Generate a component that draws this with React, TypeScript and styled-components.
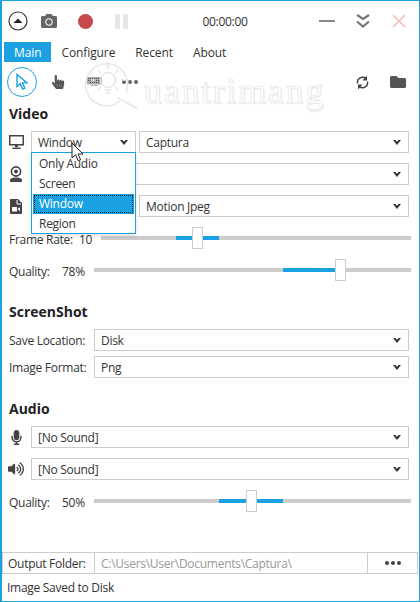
import styled, { createGlobalStyle } from "styled-components";
import { FaCamera, FaFolder, FaHandPointer, FaMicrophone, FaVolumeUp } from "react-icons/fa";

const GlobalStyle = createGlobalStyle`
  html, body {
    margin: 0;
    padding: 0;
    background: #fff;
  }
  body {
    font-family: "Open Sans", "Noto Sans", sans-serif;
    font-size: 12px;
    letter-spacing: -0.28px;
    color: #333;
  }
`;

const Chevron = () => (
  <Arrow viewBox="0 0 10 6">
    <path d="M0 0h3l2 2 2-2h3L5 6z" fill="#333" />
  </Arrow>
);

const Combo = ({ value, width }: { value: string; width?: number }) => (
  <ComboBox $width={width}>
    <span>{value}</span>
    <Chevron />
  </ComboBox>
);

const Slider = ({ left, width, thumb }: { left: number; width: number; thumb: number }) => (
  <Track>
    <Fill style={{ left, width }} />
    <Thumb style={{ left: thumb }} />
  </Track>
);

const Dots = ({ color }: { color: string }) => (
  <DotGroup $color={color}>
    <i />
    <i />
    <i />
  </DotGroup>
);

const App = () => {
  return (
    <>
      <GlobalStyle />
      <Window>
        <TitleBar>
          <IconSlot $width={32}>
            <svg width="20" height="20" viewBox="0 0 20 20">
              <circle cx="10" cy="10" r="9" fill="none" stroke="#333" strokeWidth="1.2" />
              <path d="M5.500 12L10 7.500 14.500 12z" fill="#222" />
            </svg>
          </IconSlot>
          <IconSlot $width={30}>
            <FaCamera size={16} color="#666" />
          </IconSlot>
          <IconSlot $width={42}>
            <RecordDot />
          </IconSlot>
          <IconSlot $width={30}>
            <PauseIcon>
              <i />
              <i />
            </PauseIcon>
          </IconSlot>
          <Timer>00:00:00</Timer>
          <IconSlot>
            <MinimizeBar />
          </IconSlot>
          <IconSlot>
            <svg width="16" height="16" viewBox="0 0 16 16">
              <path d="M2 2l6 4 6-4M2 8.500l6 5 6-5" fill="none" stroke="#777" strokeWidth="2.2" />
            </svg>
          </IconSlot>
          <IconSlot>
            <svg width="16" height="16" viewBox="0 0 16 16">
              <path d="M2 2l12 12M14 2L2 14" fill="none" stroke="#f8bcbc" strokeWidth="1.6" />
            </svg>
          </IconSlot>
        </TitleBar>

        <Tabs>
          <Tab $active>Main</Tab>
          <Tab>Configure</Tab>
          <Tab>Recent</Tab>
          <Tab>About</Tab>
        </Tabs>

        <Toolbar>
          <CursorButton>
            <svg width="14" height="18" viewBox="0 0 14 18">
              <path d="M2 1.500v12l3.200-2.800 2.400 5.400 2.200-1-2.400-5.200H12z" fill="#fff" stroke="#1ba1e2" strokeWidth="1.4" />
            </svg>
          </CursorButton>
          <ToolSlot>
            <FaHandPointer size={14} color="#555" />
          </ToolSlot>
          <ToolSlot>
            <svg width="15" height="10" viewBox="0 0 15 10">
              <rect x="0" y="0" width="15" height="7.500" fill="#aaa" />
              <path d="M1 1.500h13M1 3.500h13M3 5.500h9" stroke="#555" strokeDasharray="1 1" />
              <path d="M4 8.500h7" stroke="#bbb" />
            </svg>
          </ToolSlot>
          <ToolSlot>
            <Dots color="#666" />
          </ToolSlot>
          <ToolSpacer />
          <ToolSlot>
            <svg width="13" height="15" viewBox="0 0 13 15">
              <path d="M1.600 8.500A5 5 0 0 1 9.600 3.400M11.400 6.500A5 5 0 0 1 3.400 11.600" fill="none" stroke="#444" strokeWidth="1.500" />
              <path d="M11 0.500v5h-4.500zM2 14.500v-5h4.500z" fill="#444" />
            </svg>
          </ToolSlot>
          <ToolSlot>
            <FaFolder size={16} color="#555" />
          </ToolSlot>
        </Toolbar>

        <Section>
          <Heading>Video</Heading>
          <IconRow>
            <RowIcon>
              <svg width="15" height="14" viewBox="0 0 15 14">
                <rect x="0.750" y="0.750" width="13.500" height="9" fill="none" stroke="#444" strokeWidth="1.500" />
                <path d="M6 10h3v2H6zM3.500 12.500h8V14h-8z" fill="#444" />
              </svg>
            </RowIcon>
            <Combo value="Window" width={105} />
            <Combo value="Captura" />
          </IconRow>
          <IconRow>
            <RowIcon>
              <svg width="14" height="16" viewBox="0 0 14 16">
                <circle cx="7" cy="5.500" r="4.600" fill="none" stroke="#444" strokeWidth="1.600" />
                <circle cx="7" cy="5.500" r="2" fill="#444" />
                <path d="M1 16v-1.500c0-2 2-3 6-3s6 1 6 3V16z" fill="#444" />
              </svg>
            </RowIcon>
            <Combo value="" />
          </IconRow>
          <IconRow>
            <RowIcon>
              <svg width="12" height="15" viewBox="0 0 12 15">
                <path d="M1 0h7l4 4v10a1 1 0 0 1-1 1H1a1 1 0 0 1-1-1V1a1 1 0 0 1 1-1z" fill="#444" />
                <path d="M7 1v4h4" fill="none" stroke="#fff" />
                <rect x="2" y="8" width="5" height="4.500" fill="#fff" />
                <path d="M7.500 10l2.500-1.800v4.100z" fill="#fff" />
              </svg>
            </RowIcon>
            <Combo value="" width={105} />
            <Combo value="Motion Jpeg" />
          </IconRow>

          <Dropdown>
            <DropItem>Only Audio</DropItem>
            <DropItem>Screen</DropItem>
            <DropItem $selected>Window</DropItem>
            <DropItem>Region</DropItem>
          </Dropdown>
          <Pointer viewBox="0 0 14 20">
            <path d="M1 1v15l3.600-3.200 2.600 6 2.400-1-2.600-5.800H12z" fill="#fff" stroke="#222" strokeWidth="1" />
          </Pointer>

          <SliderRow>
            <FrameLabel>Frame Rate:</FrameLabel>
            <FrameValue>10</FrameValue>
            <Slider left={75} width={43} thumb={91} />
          </SliderRow>
          <SliderRow>
            <SliderLabel>Quality:</SliderLabel>
            <SliderValue>78%</SliderValue>
            <Slider left={189} width={63} thumb={241} />
          </SliderRow>
        </Section>

        <ShotSection>
          <Heading>ScreenShot</Heading>
          <LabelRow>
            <FieldLabel>Save Location:</FieldLabel>
            <Combo value="Disk" />
          </LabelRow>
          <LabelRow>
            <FieldLabel>Image Format:</FieldLabel>
            <Combo value="Png" />
          </LabelRow>
        </ShotSection>

        <AudioSection>
          <Heading>Audio</Heading>
          <IconRow>
            <RowIcon>
              <FaMicrophone size={15} color="#444" />
            </RowIcon>
            <Combo value="[No Sound]" />
          </IconRow>
          <IconRow>
            <RowIcon>
              <FaVolumeUp size={16} color="#444" />
            </RowIcon>
            <Combo value="[No Sound]" />
          </IconRow>
          <SliderRow>
            <SliderLabel>Quality:</SliderLabel>
            <SliderValue>50%</SliderValue>
            <Slider left={125} width={64} thumb={152} />
          </SliderRow>
        </AudioSection>

        <OutputBar>
          <OutputLabel>Output Folder:</OutputLabel>
          <OutputPath>C:\Users\User\Documents\Captura\</OutputPath>
          <OutputMore>
            <Dots color="#444" />
          </OutputMore>
        </OutputBar>
        <Status>Image Saved to Disk</Status>

        <Watermark>
          <svg width="62" height="50" viewBox="0 0 62 50">
            <path
              d="M38 41A21 21 0 1 1 44 33M36 38l20 11"
              fill="none"
              stroke="#e6e6e6"
              strokeWidth="1.500"
            />
            <circle cx="26" cy="20" r="7.500" fill="none" stroke="#e6e6e6" strokeWidth="1.500" />
            <path
              d="M23 30h6M24 33h4M26 4v5M13 20h-4M39 20h4M16 10l3 3M36 10l-3 3M16 30l3-3M36 30l-3-3"
              stroke="#e6e6e6"
              strokeWidth="1.500"
            />
          </svg>
          <WatermarkText>uantrimang</WatermarkText>
        </Watermark>
      </Window>
    </>
  );
};

export default App;

const Window = styled.div`
  position: relative;
  box-sizing: border-box;
  width: 420px;
  height: 602px;
  border: 1px solid #1ba1e2;
  box-shadow: inset 1px 0 0 #1ba1e2;
  overflow: hidden;
  background: #fff;
`;

const TitleBar = styled.div`
  display: flex;
  align-items: center;
  height: 40px;
  padding: 0 2px 0 1px;
`;

const IconSlot = styled.div<{ $width?: number }>`
  display: flex;
  flex: none;
  align-items: center;
  justify-content: center;
  width: ${(p) => p.$width ?? 36}px;
  height: 40px;
`;

const RecordDot = styled.div`
  width: 15px;
  height: 15px;
  border-radius: 50%;
  background: #c8484b;
`;

const PauseIcon = styled.div`
  display: flex;
  gap: 3px;
  i {
    width: 5px;
    height: 15px;
    background: #e6e6e6;
  }
`;

const MinimizeBar = styled.div`
  width: 16px;
  height: 2px;
  background: #888;
`;

const Timer = styled.div`
  flex: 1;
  text-align: center;
  padding-left: 5px;
`;

const Tabs = styled.div`
  display: flex;
  height: 20px;
  padding-left: 3px;
  margin-top: 1px;
  align-items: stretch;
`;

const Tab = styled.div<{ $active?: boolean }>`
  display: flex;
  align-items: center;
  padding: 0 10px;
  letter-spacing: -0.1px;
  background: ${(p) => (p.$active ? "#1ba1e2" : "transparent")};
  color: ${(p) => (p.$active ? "#fff" : "#333")};
`;

const Toolbar = styled.div`
  display: flex;
  align-items: center;
  height: 32px;
  margin-top: 4px;
  padding: 0 3px;
`;

const CursorButton = styled.div`
  box-sizing: border-box;
  display: flex;
  align-items: center;
  justify-content: center;
  width: 30px;
  height: 30px;
  margin: 0 3px;
  border: 1px solid #1ba1e2;
  border-radius: 50%;
`;

const ToolSlot = styled.div`
  display: flex;
  align-items: center;
  justify-content: center;
  width: 36px;
  height: 32px;
`;

const ToolSpacer = styled.div`
  flex: 1;
`;

const DotGroup = styled.span<{ $color: string }>`
  display: inline-flex;
  gap: 2px;
  i {
    width: 4px;
    height: 4px;
    border-radius: 50%;
    background: ${(p) => p.$color};
  }
`;

const Section = styled.div`
  position: relative;
  display: flex;
  flex-direction: column;
  padding: 7px 10px 0 8px;
`;

const ShotSection = styled(Section)`
  padding-top: 12px;
`;

const AudioSection = styled(Section)`
  padding-top: 17px;
`;

const Heading = styled.div`
  font-size: 14px;
  font-weight: 700;
  letter-spacing: 0;
  color: #222;
  line-height: 17px;
  margin-bottom: 9px;
`;

const IconRow = styled.div`
  display: flex;
  align-items: center;
  gap: 3px;
  height: 22px;
  margin-bottom: 10px;
`;

const RowIcon = styled.div`
  display: flex;
  align-items: center;
  justify-content: center;
  width: 16px;
  margin-right: 4px;
  margin-left: -1px;
`;

const ComboBox = styled.div<{ $width?: number }>`
  box-sizing: border-box;
  display: flex;
  align-items: center;
  justify-content: space-between;
  height: 22px;
  padding: 0 7px 0 6px;
  border: 1px solid #ccc;
  background: #fff;
  ${(p) => (p.$width ? `width: ${p.$width}px; flex: none;` : "flex: 1;")}
`;

const Arrow = styled.svg`
  width: 8px;
  height: 5px;
`;

const Dropdown = styled.div`
  position: absolute;
  z-index: 2;
  top: 54px;
  left: 30px;
  box-sizing: border-box;
  width: 105px;
  height: 82px;
  padding: 1px;
  border: 1px solid #1ba1e2;
  background: #fff;
  box-shadow: 0 2px 4px rgba(0, 0, 0, 0.12);
`;

const DropItem = styled.div<{ $selected?: boolean }>`
  box-sizing: border-box;
  display: flex;
  align-items: center;
  height: 20px;
  padding: 0 0 1px 6px;
  line-height: 15px;
  background: ${(p) => (p.$selected ? "#1ba1e2" : "transparent")};
  color: ${(p) => (p.$selected ? "#fff" : "#333")};
  outline: ${(p) => (p.$selected ? "1px dotted #123" : "none")};
  outline-offset: -2px;
`;

const Pointer = styled.svg`
  position: absolute;
  z-index: 3;
  top: 44px;
  left: 70px;
  width: 14px;
  height: 20px;
`;

const SliderRow = styled.div`
  display: flex;
  align-items: center;
  height: 22px;
  margin-bottom: 10px;
`;

const RowText = styled.span`
  flex: none;
  padding-top: 2px;
  line-height: 15px;
`;

const SliderLabel = styled(RowText)`
  width: 53px;
`;

const SliderValue = styled(RowText)`
  width: 32px;
`;

const FrameLabel = styled(RowText)`
  width: 70px;
`;

const FrameValue = styled(RowText)`
  width: 22px;
`;

const Track = styled.div`
  position: relative;
  flex: 1;
  height: 4px;
  background: #ccc;
  margin-right: -2px;
`;

const Fill = styled.div`
  position: absolute;
  top: 0;
  height: 4px;
  background: #1ba1e2;
`;

const Thumb = styled.div`
  position: absolute;
  top: -9px;
  box-sizing: border-box;
  width: 11px;
  height: 22px;
  border: 1px solid #ccc;
  background: #fff;
`;

const LabelRow = styled.div`
  display: flex;
  align-items: center;
  height: 22px;
  margin-bottom: 5px;
`;

const FieldLabel = styled.span`
  width: 85px;
  flex: none;
`;

const OutputBar = styled.div`
  position: absolute;
  left: 1px;
  right: 0;
  top: 551px;
  display: flex;
  height: 22px;
`;

const OutputCell = styled.div`
  box-sizing: border-box;
  display: flex;
  flex: none;
  align-items: center;
  border: 1px solid #ccc;
  margin-right: -1px;
`;

const OutputLabel = styled(OutputCell)`
  width: 93px;
  padding-left: 5px;
`;

const OutputPath = styled(OutputCell)`
  width: 274px;
  padding-left: 6px;
  color: #999;
`;

const OutputMore = styled(OutputCell)`
  width: 51px;
  justify-content: center;
`;

const Status = styled.div`
  position: absolute;
  left: 6px;
  top: 578px;
`;

const Watermark = styled.div`
  position: absolute;
  top: 59px;
  left: 81px;
  display: flex;
  align-items: flex-start;
  pointer-events: none;
`;

const WatermarkText = styled.span`
  font-family: "Liberation Serif", serif;
  font-size: 36px;
  line-height: 46px;
  letter-spacing: 1.7px;
  margin-top: 8px;
  color: #fff;
  -webkit-text-stroke: 0.7px #e6e6e6;
  text-shadow: 1px 1px 1px #eee;
`;
